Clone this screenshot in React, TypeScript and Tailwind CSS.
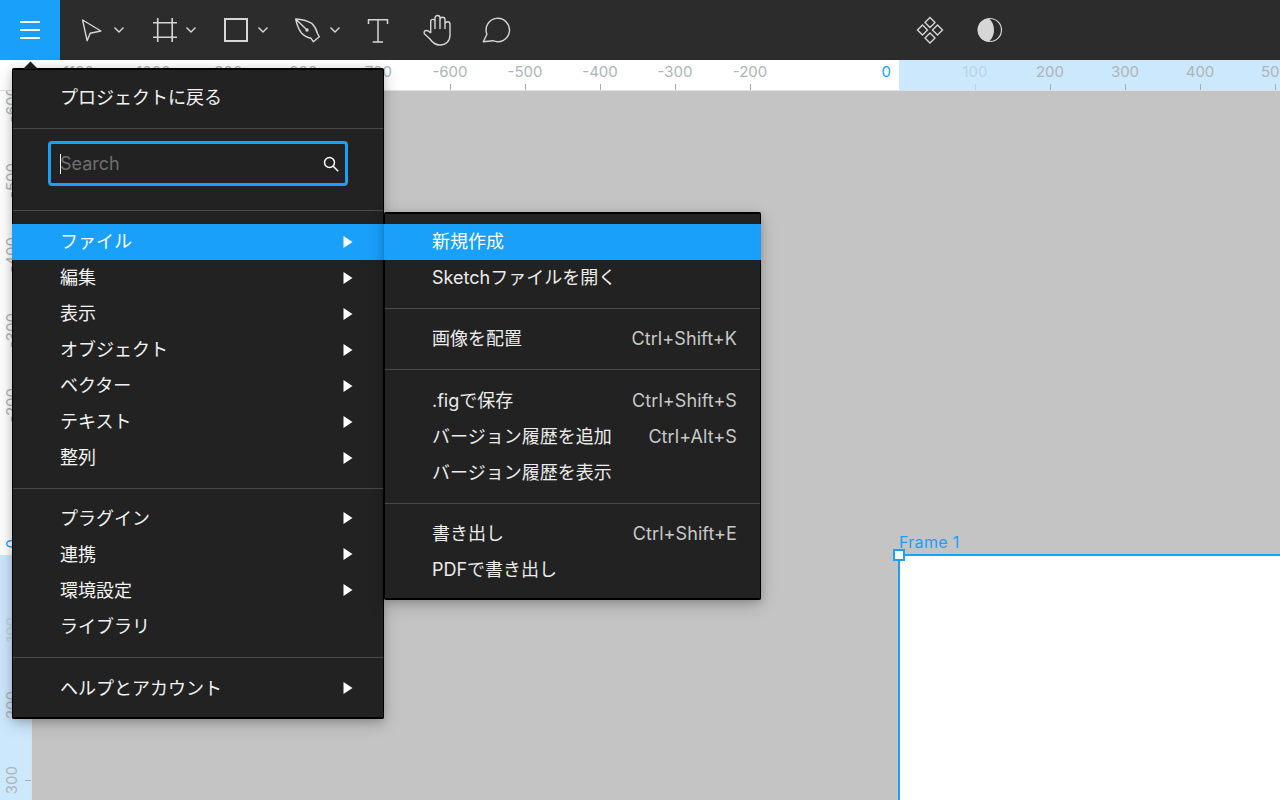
const mainGroups = {
  file: ["ファイル", "編集", "表示", "オブジェクト", "ベクター", "テキスト", "整列"],
  more: ["プラグイン", "連携", "環境設定"],
};

function Chevron({ className }: { className: string }) {
  return (
    <svg viewBox="0 0 12 12" className={`h-3 w-3 shrink-0 ${className}`} fill="none" stroke="#d6d6d6" strokeWidth="1.4">
      <polyline points="1.5,3.5 6,8 10.5,3.5" />
    </svg>
  );
}

function Tool({ className, children }: { className: string; children: React.ReactNode }) {
  return (
    <svg viewBox="0 0 32 32" className={`h-8 w-8 shrink-0 ${className}`} fill="none" stroke="#d6d6d6" strokeWidth="1.4">
      {children}
    </svg>
  );
}

function Toolbar() {
  return (
    <div className="flex h-[60px] items-center bg-[#2c2c2c]">
      <div className="flex h-[60px] w-[60px] shrink-0 flex-col items-center justify-center gap-[6px] bg-[#18a0fb]">
        <div className="h-[2px] w-5 bg-white" />
        <div className="h-[2px] w-5 bg-white" />
        <div className="h-[2px] w-5 bg-white" />
      </div>
      <Tool className="ml-[16px]">
        <path d="M6.6 6 L24.9 17 L14.2 19.3 L11.1 26.7 Z" strokeLinejoin="round" />
      </Tool>
      <Chevron className="ml-[5px]" />
      <Tool className="ml-[24px]">
        <path d="M8.7 4 V28 M23.2 4 V28 M4 8.7 H28 M4 23.3 H28" strokeWidth="1.6" />
      </Tool>
      <Chevron className="ml-[4px]" />
      <Tool className="ml-[23px]">
        <rect x="5" y="5" width="22" height="22" strokeWidth="2" />
      </Tool>
      <Chevron className="ml-[5px]" />
      <Tool className="ml-[22px]">
        <path d="M4.7 5 Q14 5.5 20.7 9.3 Q25 13.5 26.7 20 L28.3 22.7 L22.3 27.7 L20 24.3 Q14 23 10.7 19.3 Q6.5 14 4.7 5 Z M4.7 5 L15 15" strokeLinejoin="round" />
        <circle cx="16" cy="16" r="1.7" fill="#d6d6d6" stroke="none" />
      </Tool>
      <Chevron className="ml-[6px]" />
      <Tool className="ml-[21px]">
        <path d="M6.5 10 V5.7 H25.5 V10 M16 5.7 V28 M10.7 28 H21" strokeWidth="1.5" />
      </Tool>
      <Tool className="ml-[27px]">
        <path
          d="M9.7 19 V7.5 a2.15 2.15 0 0 1 4.3 0 V15 M14 15 V4 a2.5 2.5 0 0 1 5 0 V15 M19 15 V5.8 a2.5 2.5 0 0 1 5 0 V15 M24 15 V10.2 a2.5 2.5 0 0 1 5 0 V21 C29 27 25 31 19 31 C13.5 31 11 28 9 25 L3.6 20 C2.5 18.7 3.2 16.8 5 16.5 C7 16.3 8.5 17.5 9.7 19"
          strokeLinejoin="round"
        />
      </Tool>
      <Tool className="ml-[29px]">
        <path d="M4.9 20.3 A11.7 11.7 0 1 1 11 26.7 L1.3 27.7 Z" strokeLinejoin="round" />
      </Tool>
      <Tool className="ml-[400px]">
        <path d="M16 3.5 L21 8.5 L16 13.5 L11 8.5 Z M8.5 11 L13.5 16 L8.5 21 L3.5 16 Z M23.5 11 L28.5 16 L23.5 21 L18.5 16 Z M16 19 L21 24 L16 29 L11 24 Z" strokeWidth="1.4" />
      </Tool>
      <Tool className="ml-[28px]">
        <circle cx="16" cy="16" r="11.5" strokeWidth="1.2" />
        <path d="M15 4.5 A11.5 11.5 0 0 0 15 27.5 C18.5 24.5 20 20.5 20 16 C20 11.5 18.5 7.5 15 4.5 Z" fill="#d6d6d6" stroke="none" />
      </Tool>
    </div>
  );
}

function HTick({ label, faded }: { label: string; faded?: boolean }) {
  return (
    <div className="flex h-[31px] w-[75px] shrink-0 flex-col items-center">
      <span className={`mt-[2px] h-[20px] text-[15px] leading-[20px] ${faded ? "text-[#bcd3e2]" : "text-[#aeb4b8]"}`}>{label}</span>
      <div className={`mt-[2px] h-[6px] w-px ${faded ? "bg-[#bcd3e2]" : "bg-[#a9adb0]"}`} />
    </div>
  );
}

function TopRuler() {
  const left = ["-1100", "-1000", "-900", "-800", "-700", "-600", "-500", "-400", "-300", "-200"];
  return (
    <div className="flex h-[31px] border-b border-[#e0e0e0] bg-white">
      <div className="flex w-[899px] shrink-0 pl-[37.5px]">
        {left.map((l) => (
          <HTick key={l} label={l} />
        ))}
        <span className="ml-auto mr-[8px] mt-[2px] text-[15px] leading-[20px] text-[#18a0fb]">0</span>
      </div>
      <div className="flex flex-1 overflow-hidden bg-[#cce8fd] pl-[38.5px]">
        <HTick label="100" faded />
        <HTick label="200" />
        <HTick label="300" />
        <HTick label="400" />
        <HTick label="500" />
      </div>
    </div>
  );
}

function VTick({ label, faded }: { label: string; faded?: boolean }) {
  return (
    <div className="flex h-[75px] w-[31px] shrink-0 items-center">
      <span className={`ml-[2px] w-[20px] text-center text-[15px] leading-[20px] [writing-mode:vertical-rl] rotate-180 ${faded ? "text-[#bcd3e2]" : "text-[#aeb4b8]"}`}>
        {label}
      </span>
      <div className={`ml-[3px] h-px w-[6px] ${faded ? "bg-[#bcd3e2]" : "bg-[#a9adb0]"}`} />
    </div>
  );
}

function LeftRuler() {
  return (
    <div className="flex h-[709px] w-[32px] shrink-0 flex-col border-r border-[#e0e0e0] bg-white">
      <div className="flex h-[464px] shrink-0 flex-col overflow-hidden">
        <div className="-mt-[23.5px] flex flex-col">
          {["-600", "-500", "-400", "-300", "-200"].map((l) => (
            <VTick key={l} label={l} />
          ))}
        </div>
        <span className="ml-[2px] mt-auto mb-[7px] w-[20px] text-center text-[15px] leading-[20px] text-[#18a0fb] [writing-mode:vertical-rl] rotate-180">0</span>
      </div>
      <div className="flex flex-1 flex-col overflow-hidden bg-[#cce8fd] pt-[37.5px]">
        <VTick label="100" faded />
        <VTick label="200" />
        <VTick label="300" />
      </div>
    </div>
  );
}

function Arrow() {
  return (
    <svg viewBox="0 0 10 12" className="h-3 w-[10px] shrink-0" fill="#fff">
      <path d="M0.5 0 L9.5 6 L0.5 12 Z" />
    </svg>
  );
}

function MenuRow({ label, arrow, active, up }: { label: string; arrow?: boolean; active?: boolean; up?: boolean }) {
  return (
    <div className={`flex h-9 items-center justify-between pl-[48px] pr-[31px] text-[18px] text-[#f2f2f2] ${active ? "bg-[#18a0fb] text-white" : ""}`}>
      <span className={up ? "pb-[2px]" : ""}>{label}</span>
      {arrow && <Arrow />}
    </div>
  );
}

function SubRow({ label, keys, active, up }: { label: string; keys?: string; active?: boolean; up?: boolean }) {
  return (
    <div className={`flex h-9 items-center justify-between pl-[48px] pr-[24px] text-[18px] text-[#ececec] ${active ? "bg-[#18a0fb] text-white" : ""}`}>
      <span className={up ? "pb-[2px]" : ""}>{label}</span>
      {keys && <span className="tracking-[0.08px] text-[#c9c9c9]">{keys}</span>}
    </div>
  );
}

function MainMenu() {
  return (
    <div className="absolute left-[12px] top-[68px] w-[372px] rounded-[2px] border-y border-black bg-[#222222] shadow-[inset_0_0_0_1px_#000,0_5px_17px_rgba(0,0,0,0.2),0_2px_7px_rgba(0,0,0,0.15)]">
      <svg viewBox="0 0 15 8" className="absolute -top-[8px] left-[11px] h-2 w-[15px]" fill="#1b1b1b">
        <path d="M0 8 L7.5 0.5 L15 8 Z" />
      </svg>
      <div className="pb-[12px] pt-[11px]">
        <MenuRow label="プロジェクトに戻る" up />
      </div>
      <div className="mx-px h-px bg-[#4a4a4a]" />
      <div className="px-[36px] pb-[24px] pt-[12px]">
        <div className="flex h-[45px] items-center rounded-[4px] border-[3px] border-[#18a0fb] pl-[9px] pr-[6px]">
          <div className="h-[20px] w-px bg-white" />
          <span className="-ml-px flex-1 text-[18px] text-[#6f6f6f]">Search</span>
          <svg viewBox="0 0 16 16" className="h-4 w-4 shrink-0" fill="none" stroke="#fff" strokeWidth="1.5">
            <circle cx="6.5" cy="6.5" r="5" />
            <path d="M10.2 10.2 L15.2 15.2" />
          </svg>
        </div>
      </div>
      <div className="mx-px h-px bg-[#4a4a4a]" />
      <div className="pb-[12px] pt-[13px]">
        {mainGroups.file.map((l, i) => (
          <MenuRow key={l} label={l} arrow active={i === 0} up />
        ))}
      </div>
      <div className="mx-px h-px bg-[#4a4a4a]" />
      <div className="pb-[13px] pt-[11px]">
        {mainGroups.more.map((l) => (
          <MenuRow key={l} label={l} arrow />
        ))}
        <MenuRow label="ライブラリ" />
      </div>
      <div className="mx-px h-px bg-[#4a4a4a]" />
      <div className="pb-[12px] pt-[12px]">
        <MenuRow label="ヘルプとアカウント" arrow />
      </div>
    </div>
  );
}

function SubMenu() {
  return (
    <div className="absolute left-[384px] top-[212px] w-[377px] rounded-[2px] border-y border-black bg-[#222222] shadow-[inset_0_0_0_1px_#000,0_5px_17px_rgba(0,0,0,0.2),0_2px_7px_rgba(0,0,0,0.15)]">
      <div className="pb-[12px] pt-[11px]">
        <SubRow label="新規作成" active up />
        <SubRow label="Sketchファイルを開く" up />
      </div>
      <div className="mx-px h-px bg-[#4a4a4a]" />
      <div className="pb-[13px] pt-[11px]">
        <SubRow label="画像を配置" keys="Ctrl+Shift+K" />
      </div>
      <div className="mx-px h-px bg-[#4a4a4a]" />
      <div className="pb-[13px] pt-[12px]">
        <SubRow label=".figで保存" keys="Ctrl+Shift+S" />
        <SubRow label="バージョン履歴を追加" keys="Ctrl+Alt+S" />
        <SubRow label="バージョン履歴を表示" />
      </div>
      <div className="mx-px h-px bg-[#4a4a4a]" />
      <div className="pb-[12px] pt-[11px]">
        <SubRow label="書き出し" keys="Ctrl+Shift+E" />
        <SubRow label="PDFで書き出し" />
      </div>
    </div>
  );
}

export default function App() {
  return (
    <div className="relative h-[800px] w-[1280px] overflow-hidden bg-[#c4c4c4] font-[Inter,'Noto_Sans_CJK_JP',sans-serif]">
      <Toolbar />
      <TopRuler />
      <div className="flex h-[709px]">
        <LeftRuler />
        <div className="relative flex-1">
          {/* frame on the canvas */}
          <span className="absolute left-[867px] top-[440px] text-[16px] leading-[22px] tracking-[0.3px] text-[#18a0fb]">Frame 1</span>
          <div className="absolute left-[866px] top-[463px] h-[400px] w-[500px] border-2 border-[#18a0fb] bg-white" />
          <div className="absolute left-[861px] top-[458px] h-[12px] w-[12px] border-2 border-[#18a0fb] bg-white" />
        </div>
      </div>
      <MainMenu />
      <SubMenu />
    </div>
  );
}
